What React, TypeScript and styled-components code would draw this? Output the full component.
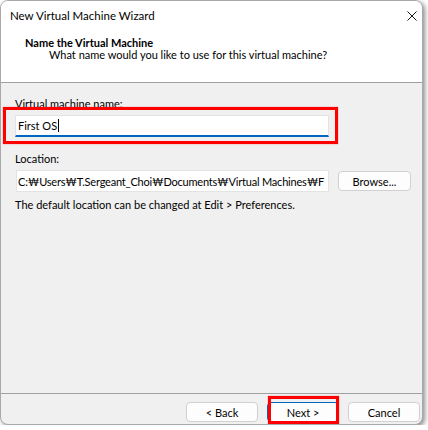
import styled, { createGlobalStyle } from "styled-components";

const GlobalStyle = createGlobalStyle`
  html, body {
    margin: 0;
    padding: 0;
    background: #ffffff;
  }
  body {
    font-family: "Segoe UI", Lato, "Liberation Sans", sans-serif;
    font-size: 11px;
    color: #000;
  }
`;

const App = () => {
  return (
    <>
      <GlobalStyle />
      <Window>
        <TitleBar>
          <WindowTitle>New Virtual Machine Wizard</WindowTitle>
          <CloseButton aria-label="Close">
            <svg width="10" height="10" viewBox="0 0 10 10">
              <path d="M0.5 0.5 L9.5 9.5 M9.5 0.5 L0.5 9.5" stroke="#1a1a1a" strokeWidth="1" />
            </svg>
          </CloseButton>
        </TitleBar>
        <Header>
          <HeaderTitle>Name the Virtual Machine</HeaderTitle>
          <HeaderSubtitle>What name would you like to use for this virtual machine?</HeaderSubtitle>
        </Header>
        <Body>
          <Label>Virtual machine name:</Label>
          <FieldWrap>
            <NameInput>
              First OS<Caret />
            </NameInput>
            <NameHighlight />
          </FieldWrap>
          <Label $gap={15}>Location:</Label>
          <LocationRow>
            <LocationInput>
              <LocationText>C:₩Users₩T.Sergeant_Choi₩Documents₩Virtual Machines₩F</LocationText>
            </LocationInput>
            <Button $width={73}>Browse...</Button>
          </LocationRow>
          <Note>The default location can be changed at Edit &gt; Preferences.</Note>
        </Body>
        <Footer>
          <Button>&lt; Back</Button>
          <ButtonWrap>
            <Button $primary>Next &gt;</Button>
            <NextHighlight />
          </ButtonWrap>
          <Button>Cancel</Button>
        </Footer>
      </Window>
    </>
  );
};

export default App;

// Styled Components
const Window = styled.div`
  width: 421px;
  height: 423px;
  border: 1px solid #a9a9a9;
  border-radius: 8px;
  overflow: hidden;
  display: flex;
  flex-direction: column;
  background: #f0f0f0;
  box-shadow: 2px 2px 5px rgba(0, 0, 0, 0.45);
`;

const TitleBar = styled.div`
  height: 29px;
  display: flex;
  align-items: center;
  justify-content: space-between;
  padding: 0 0 0 9px;
  background: #ffffff;
`;

const WindowTitle = styled.span`
  font-size: 11.5px;
`;

const CloseButton = styled.div`
  width: 20px;
  height: 29px;
  display: flex;
  align-items: center;
  justify-content: center;
`;

const Header = styled.div`
  height: 53px;
  box-sizing: border-box;
  background: #ffffff;
  border-bottom: 1px solid #a0a0a0;
  padding: 7px 0 0 24px;
`;

const HeaderTitle = styled.div`
  font-weight: 700;
  line-height: 12px;
`;

const HeaderSubtitle = styled.div`
  line-height: 12px;
  padding-left: 24px;
`;

const Body = styled.div`
  flex: 1;
  padding: 14px 11px 0 14px;
  display: flex;
  flex-direction: column;
`;

const Label = styled.div<{ $gap?: number }>`
  line-height: 14px;
  margin-top: ${({ $gap }) => ($gap ? `${$gap}px` : "0")};
`;

const FieldWrap = styled.div`
  position: relative;
  width: 314px;
  margin-top: 4px;
`;

const NameInput = styled.div`
  height: 19px;
  background: #ffffff;
  border: 1px solid #e3e3e3;
  border-bottom: 2px solid #0067c0;
  padding-left: 2px;
  display: flex;
  align-items: center;
`;

const Caret = styled.span`
  display: inline-block;
  width: 1px;
  height: 13px;
  background: #000;
  margin-left: 1px;
`;

const NameHighlight = styled.div`
  position: absolute;
  top: -8px;
  left: -12px;
  right: -9px;
  bottom: -7px;
  border: 3px solid #ff0000;
  box-shadow: 0 0 1px rgba(255, 0, 0, 0.6);
  pointer-events: none;
`;

const LocationRow = styled.div`
  display: flex;
  align-items: center;
  gap: 9px;
  margin-top: 4px;
`;

const LocationInput = styled.div`
  width: 310px;
  height: 20px;
  margin-left: 1px;
  background: #ffffff;
  border: 1px solid #e3e3e3;
  padding-left: 1px;
  display: flex;
  align-items: center;
  overflow: hidden;
`;

const LocationText = styled.span`
  white-space: nowrap;
  letter-spacing: -0.2px;
`;

const Note = styled.div`
  margin-top: 6px;
  line-height: 14px;
`;

const Footer = styled.div`
  height: 31px;
  box-sizing: border-box;
  border-top: 1px solid #a0a0a0;
  display: flex;
  align-items: flex-start;
  justify-content: flex-end;
  gap: 9px;
  padding: 8px 2px 0 0;
`;

const ButtonWrap = styled.div`
  position: relative;
`;

const Button = styled.button<{ $primary?: boolean; $width?: number }>`
  width: ${({ $width }) => ($width ? `${$width}px` : "72px")};
  height: 20px;
  padding: 0;
  font: inherit;
  color: #000;
  background: #fdfdfd;
  border: 1px solid ${({ $primary }) => ($primary ? "#0067c0" : "#d0d0d0")};
  border-radius: 4px;
  display: flex;
  align-items: center;
  justify-content: center;
`;

const NextHighlight = styled.div`
  position: absolute;
  top: -6px;
  left: 1px;
  right: 0;
  bottom: -2px;
  border: 3px solid #ff0000;
  box-shadow: 0 0 1px rgba(255, 0, 0, 0.6);
  pointer-events: none;
`;
